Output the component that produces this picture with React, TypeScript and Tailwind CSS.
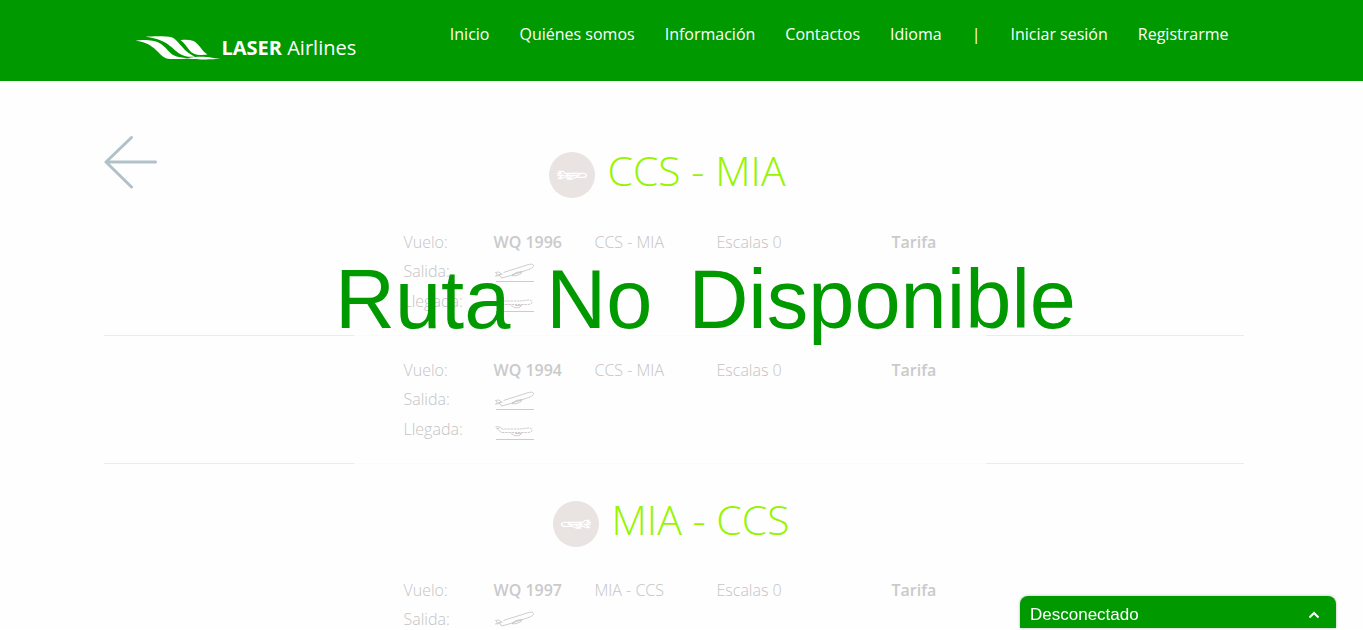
import React from "react";

const navLinks = ["Inicio", "Quiénes somos", "Información", "Contactos", "Idioma"];
const accountLinks = ["Iniciar sesión", "Registrarme"];

function Logo() {
  return (
    <a href="#" className="flex items-center text-xl leading-7 text-white">
      <svg className="h-6 w-[87px]" viewBox="0 0 86 24" fill="white" aria-hidden="true">
        <path d="M0 4.800C5 3.800 12 4 17 4.800C24 6 28 9.500 32 14C36 18.500 39 21.500 53 22.200C46 23.200 36 23.500 31 22.500C23 20 20 7 0 4.800Z" />
        <path d="M10 0.800C18 0 31 0 36 1.200C42 3.200 47 13.500 55 18.200C57 19.500 58 20.200 60 20.600C54 21.400 48 20.500 43 17C35 11 31 3.500 10 0.800Z" />
        <path d="M45 4.200C50 3.600 54 3.800 58 5C64 8 66 15 72 18.600C68 19.300 62 19.500 58 17.500C52 14 51 8 45 4.200Z" />
        <path d="M51 22.600C56 20.600 68 20.200 74 21.200C78 22.200 82 22.800 86 22.600C78 23.800 58 23.800 51 22.600Z" />
      </svg>
      <span className="font-['Open_Sans','Noto_Sans',sans-serif]">
        <b className="font-bold">LASER</b> Airlines
      </span>
    </a>
  );
}

function PlaneBadge({ flipped = false }: { flipped?: boolean }) {
  return (
    <svg className="h-[46px] w-[46px]" viewBox="0 0 46 46" fill="none" aria-hidden="true">
      <circle cx="23" cy="23" r="23" fill="#e9e3e2" />
      <g
        transform={flipped ? "matrix(-1 0 0 1 46 0)" : undefined}
        stroke="white"
        strokeWidth="1.300"
        strokeLinejoin="round"
        strokeLinecap="round"
      >
        <path d="M12 21.500L10 19.300h3.500l2.500 2h18c2.500 0 3.500 1 3.500 2s-1 2-3 2H27" />
        <path d="M12 21.500H8.500M9 23.500h6M12.500 24.500L9.500 26.500h3.500l3.500-1.500h3" />
        <path d="M17 23.500h11l3-.8M24 24l-6 3h5l6-2.500M16.500 21.500l3 1" />
      </g>
    </svg>
  );
}

function PlaneOutline({ landing = false }: { landing?: boolean }) {
  return (
    <svg
      className="h-5 w-10"
      viewBox="0 0 40 20"
      fill="none"
      stroke="#bdb6b6"
      strokeWidth="0.700"
      role="img"
      aria-label={landing ? "Llegada" : "Salida"}
    >
      {landing ? (
        <g>
          <path strokeDasharray="2.500 .7" d="M8 12.500H33c4 0 5-1 5-2.500S37 8 34.500 8L26 9H9.500" />
          <path d="M8 12.500C5.500 11.500 4.500 10 3.500 8.500M1.500 6.800H5l4.500 3M2.500 8.500H5M17 13.500l4 2.200h4l3-2.700M21 13.500l6 .2" />
        </g>
      ) : (
        <g>
          <path d="M9.500 10.500L33 3c4-1.300 6-1 6.500.2s-1 2.800-4.500 4.200L15 14l-7.500 2L6 13.500 1.500 14l2-1.500L1.500 10.500l3-.5 4 2.500" />
          <path d="M18 13.500l4-3 5.500-.8-.5 2-5 2h-4M4.500 12.500h3" />
        </g>
      )}
      <path d="M2 19.500h38" stroke="#cfcbcb" strokeWidth="1" />
    </svg>
  );
}

function RouteHeading({ route, flipped = false }: { route: string; flipped?: boolean }) {
  return (
    <h2
      className={`flex items-center justify-center gap-3 text-[41px] leading-[46px] font-light text-[#95f500] ${
        flipped ? "pr-1" : "pr-3"
      }`}
    >
      <PlaneBadge flipped={flipped} />
      <span className="-mt-2.5">{route}</span>
    </h2>
  );
}

function Flight({ code, route, partial = false }: { code: string; route: string; partial?: boolean }) {
  return (
    <table className="ml-[300px] table-fixed text-left text-base leading-[29px] font-light text-[#c4c4c4]">
      <colgroup>
        <col className="w-[90px]" />
        <col className="w-[101px]" />
        <col className="w-[122px]" />
        <col className="w-[175px]" />
        <col className="w-[100px]" />
      </colgroup>
      <tbody>
        <tr>
          <th className="font-light">Vuelo:</th>
          <td className="font-semibold text-[#cacaca]">{code}</td>
          <td>{route}</td>
          <td>Escalas 0</td>
          <td className="font-semibold text-[#cacaca]">Tarifa</td>
        </tr>
        <tr>
          <th className="font-light">Salida:</th>
          <td>
            <PlaneOutline />
          </td>
        </tr>
        {!partial && (
          <tr>
            <th className="pt-px font-light">Llegada:</th>
            <td className="pt-px">
              <PlaneOutline landing />
            </td>
          </tr>
        )}
      </tbody>
    </table>
  );
}

function Divider() {
  return (
    <div className="flex h-px" role="separator">
      <div className="w-[250px] bg-[#ebebeb]" />
      <div className="flex-1 bg-[#fbfbfb]" />
      <div className="w-[258px] bg-[#ebebeb]" />
    </div>
  );
}

export default function App() {
  return (
    <div className="relative h-[calc(100vh-2px)] overflow-hidden bg-[#fefefe] font-['Open_Sans','Noto_Sans',sans-serif]">
      <header className="h-[81px] bg-[#009900] pr-4">
        <div className="mx-auto flex max-w-[1140px] justify-between pr-[15px] pl-[31px]">
          <div className="pt-[34px]">
            <Logo />
          </div>
          <nav className="flex gap-[30px] pt-[22px] text-base leading-6 text-white">
            {navLinks.map((label) => (
              <a key={label} href="#">
                {label}
              </a>
            ))}
            <span>|</span>
            {accountLinks.map((label) => (
              <a key={label} href="#">
                {label}
              </a>
            ))}
          </nav>
        </div>
      </header>

      <main className="pr-4">
        <div className="relative mx-auto max-w-[1140px] pt-[71px]">
          <a href="#" aria-label="Volver" className="absolute top-[54px] left-0">
            <svg
              className="h-[54px] w-[54px]"
              viewBox="0 0 54 54"
              fill="none"
              stroke="#b0c1ca"
              strokeWidth="3"
              strokeLinecap="round"
              strokeLinejoin="round"
            >
              <path d="M27.500 2.500L2 27l25.500 25M2 27h49.500" />
            </svg>
          </a>

          <RouteHeading route="CCS - MIA" />
          <div className="pt-[30px] pb-[19px]">
            <Flight code="WQ 1996" route="CCS - MIA" />
          </div>
          <Divider />
          <div className="pt-5 pb-[19px]">
            <Flight code="WQ 1994" route="CCS - MIA" />
          </div>
          <Divider />
          <div className="pt-[37px]">
            <RouteHeading route="MIA - CCS" flipped />
          </div>
          <div className="pt-[29px]">
            <Flight code="WQ 1997" route="MIA - CCS" partial />
          </div>

          <h1 className="absolute inset-x-0 top-[171px] flex justify-center gap-9 pl-16 font-['Liberation_Sans',Arial,sans-serif] text-[83px] leading-[96px] whitespace-nowrap text-[#009900]">
            <span>Ruta</span> <span>No</span> <span>Disponible</span>
          </h1>
        </div>
      </main>

      <button
        type="button"
        className="fixed right-[27px] bottom-0.5 flex h-8 w-[316px] items-center justify-between rounded-t-lg bg-[#009900] pt-1.5 pr-4 pl-2.5 font-['Liberation_Sans',Arial,sans-serif] text-[17px] leading-6 text-white shadow-[0_0_3px_rgba(0,0,0,0.3)]"
      >
        Desconectado
        <svg className="h-2 w-3" viewBox="0 0 12 8" fill="none" stroke="white" strokeWidth="2" aria-hidden="true">
          <path d="M1.500 6.500L6 2l4.500 4.500" />
        </svg>
      </button>
    </div>
  );
}
